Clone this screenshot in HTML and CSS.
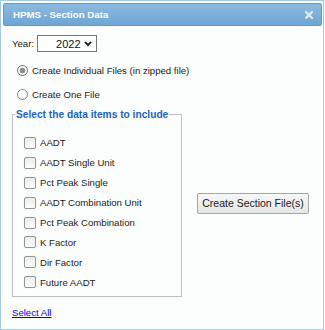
FILE: index.html
```html
<!DOCTYPE html>
<html>
  <head>
    <title>HPMS - Section Data</title>
    <link rel="stylesheet" href="styles.css">
  </head>
  <body>
    <div class="dialog">
      <div class="titlebar">
        <span class="title">HPMS - Section Data</span>
        <svg class="close" width="8" height="8" viewBox="0 0 8 8">
          <path d="M1 1 L7 7 M7 1 L1 7" stroke="#e4edf7" stroke-width="2.2" stroke-linecap="square"/>
        </svg>
      </div>
      <div class="content">
        <div class="year-row">
          <label for="year">Year:</label>
          <span class="year-wrap">
            <select id="year" class="year-select">
              <option>2022</option>
              <option>2021</option>
              <option>2020</option>
            </select>
            <svg class="chevron" width="8" height="6" viewBox="0 0 8 6">
              <path d="M1 1 L4 4.2 L7 1" fill="none" stroke="#111" stroke-width="1.8"/>
            </svg>
          </span>
        </div>

        <div class="radio-row first">
          <input type="radio" name="mode" id="individual" checked>
          <label for="individual">Create Individual Files (in zipped file)</label>
        </div>
        <div class="radio-row">
          <input type="radio" name="mode" id="onefile">
          <label for="onefile">Create One File</label>
        </div>

        <div class="items-area">
          <fieldset class="items">
            <legend>Select the data items to include</legend>
            <div class="check-row"><input type="checkbox" id="c1"><label for="c1">AADT</label></div>
            <div class="check-row"><input type="checkbox" id="c2"><label for="c2">AADT Single Unit</label></div>
            <div class="check-row"><input type="checkbox" id="c3"><label for="c3">Pct Peak Single</label></div>
            <div class="check-row"><input type="checkbox" id="c4"><label for="c4">AADT Combination Unit</label></div>
            <div class="check-row"><input type="checkbox" id="c5"><label for="c5">Pct Peak Combination</label></div>
            <div class="check-row"><input type="checkbox" id="c6"><label for="c6">K Factor</label></div>
            <div class="check-row"><input type="checkbox" id="c7"><label for="c7">Dir Factor</label></div>
            <div class="check-row"><input type="checkbox" id="c8"><label for="c8">Future AADT</label></div>
          </fieldset>
          <button class="create-btn">Create Section File(s)</button>
        </div>

        <a href="#" class="select-all">Select All</a>
      </div>
    </div>
  </body>
</html>
```

FILE: styles.css
```css
body{
  margin: 0;
  font-family: "Liberation Sans", Arial, sans-serif;
  font-size: 9.6px;
  color: #222;
}
.dialog{
  width: 324px;
  height: 330px;
  border: 1px solid #a6c9e2;
  padding: 2px 1px 0 2px;
  background-color: #fcfdfd;
  box-sizing: border-box;
}
.titlebar{
  display: flex;
  align-items: center;
  justify-content: space-between;
  height: 21px;
  padding: 0 8px 0 9px;
  background: linear-gradient(#8bbae0, #6ea5d5);
  border: 1px solid #5f9dd0;
  border-radius: 2px;
  color: white;
}
.title{
  font-weight: bold;
  font-size: 9.7px;
}
.content{
  padding: 9px 9px 0 9px;
}
.year-row{
  display: flex;
  align-items: center;
  gap: 3px;
}
.year-wrap{
  position: relative;
  display: flex;
}
.year-select{
  appearance: none;
  width: 60px;
  height: 17px;
  padding: 0 0 0 18px;
  font-family: "Liberation Sans", Arial, sans-serif;
  font-size: 11px;
  border: 1px solid #767676;
  border-radius: 0;
  background: white;
  color: #111;
}
.chevron{
  position: absolute;
  right: 5px;
  top: 6px;
  pointer-events: none;
}
.radio-row{
  display: flex;
  align-items: center;
  height: 14px;
  margin: 10px 0 0 5px;
}
.radio-row.first{
  margin-top: 11px;
}
.radio-row input{
  appearance: none;
  margin: 0 4px 0 0;
  width: 11px;
  height: 11px;
  border: 1px solid #8a8a8a;
  border-radius: 50%;
  background: white;
}
.radio-row input:checked{
  border-color: #6d6d6d;
  background: radial-gradient(circle, #8e8e8e 0 2.6px, #fff 3.2px);
}
.items-area{
  display: flex;
  align-items: center;
  margin-top: 8px;
}
.items{
  width: 170px;
  box-sizing: border-box;
  margin: 0;
  padding: 13px 6px 4px 11px;
  border: 1px solid #c0c0c0;
}
.items legend{
  color: #1a64c4;
  font-weight: bold;
  font-size: 10.2px;
  padding: 0 1px;
  margin-left: -9px;
}
.check-row{
  display: flex;
  align-items: center;
  height: 19.9px;
}
.check-row input{
  appearance: none;
  margin: 0 4px 0 0;
  width: 12px;
  height: 12px;
  border: 1px solid #949494;
  border-radius: 2px;
  background: linear-gradient(#ececec, #fdfdfd);
  box-shadow: 0 0 1px #d8d8d8;
}
.create-btn{
  margin-left: 15px;
  width: 112px;
  height: 21px;
  padding: 0;
  font-family: "Liberation Sans", Arial, sans-serif;
  font-size: 10.5px;
  color: #1a1a1a;
  background: linear-gradient(#f7f7f7, #e6e6e6);
  border: 1px solid #a6a6a6;
  border-radius: 2px;
}
.select-all{
  display: inline-block;
  margin-top: 10px;
  color: #0000ee;
}
```
